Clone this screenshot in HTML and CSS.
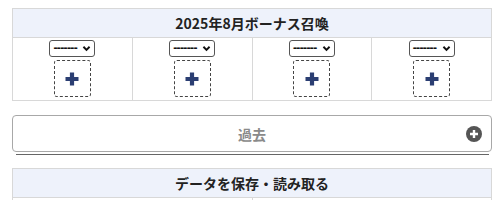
FILE: index.html
```html
<!DOCTYPE html>
<html lang="ja">
<head>
<meta charset="utf-8">
<link rel="stylesheet" href="styles.css">
</head>
<body>
<div class="page">
  <table class="grid">
    <thead>
      <tr><th colspan="4">2025年8月ボーナス召喚</th></tr>
    </thead>
    <tbody>
      <tr>
        <td><div class="cell"><div class="sel"><span class="sel-text">-------</span><svg class="chev" viewBox="0 0 10 8" width="9" height="7"><path d="M1.5 2 L5 5.5 L8.5 2" fill="none" stroke="#111" stroke-width="2.2"/></svg></div><div class="slot"><svg viewBox="0 0 16 16" width="16" height="16"><path d="M8 1.5 V14.5 M1.5 8 H14.5" stroke="#2b3e72" stroke-width="4.2"/></svg></div></div></td>
        <td><div class="cell"><div class="sel"><span class="sel-text">-------</span><svg class="chev" viewBox="0 0 10 8" width="9" height="7"><path d="M1.5 2 L5 5.5 L8.5 2" fill="none" stroke="#111" stroke-width="2.2"/></svg></div><div class="slot"><svg viewBox="0 0 16 16" width="16" height="16"><path d="M8 1.5 V14.5 M1.5 8 H14.5" stroke="#2b3e72" stroke-width="4.2"/></svg></div></div></td>
        <td><div class="cell"><div class="sel"><span class="sel-text">-------</span><svg class="chev" viewBox="0 0 10 8" width="9" height="7"><path d="M1.5 2 L5 5.5 L8.5 2" fill="none" stroke="#111" stroke-width="2.2"/></svg></div><div class="slot"><svg viewBox="0 0 16 16" width="16" height="16"><path d="M8 1.5 V14.5 M1.5 8 H14.5" stroke="#2b3e72" stroke-width="4.2"/></svg></div></div></td>
        <td><div class="cell"><div class="sel"><span class="sel-text">-------</span><svg class="chev" viewBox="0 0 10 8" width="9" height="7"><path d="M1.5 2 L5 5.5 L8.5 2" fill="none" stroke="#111" stroke-width="2.2"/></svg></div><div class="slot"><svg viewBox="0 0 16 16" width="16" height="16"><path d="M8 1.5 V14.5 M1.5 8 H14.5" stroke="#2b3e72" stroke-width="4.2"/></svg></div></div></td>
      </tr>
    </tbody>
  </table>

  <div class="collapse">
    <span class="collapse-label">過去</span>
    <svg class="collapse-icon" viewBox="0 0 16 16" width="16" height="16"><circle cx="8" cy="8" r="8" fill="#555"/><path d="M8 4 V12 M4 8 H12" stroke="#fff" stroke-width="2.4"/></svg>
  </div>
  <div class="rule"></div>

  <table class="grid second">
    <thead>
      <tr><th colspan="2">データを保存・読み取る</th></tr>
    </thead>
    <tbody>
      <tr><td></td><td></td></tr>
    </tbody>
  </table>
</div>
</body>
</html>
```
FILE: styles.css
```css
html, body {
  margin: 0;
  padding: 0;
  background: #fff;
}
body {
  font-family: "Noto Sans CJK JP", "Noto Sans", sans-serif;
  color: #222;
}
.page {
  width: 480px;
  padding: 8px 0 0 12px;
}
.grid {
  width: 480px;
  border-collapse: collapse;
  table-layout: fixed;
}
.grid th {
  height: 28px;
  padding: 0;
  background: #eef2fb;
  border: 1px solid #d8d8d8;
  font-size: 14px;
  font-weight: 700;
  text-align: center;
  color: #222;
}
.grid td {
  border: 1px solid #d8d8d8;
  padding: 0;
  vertical-align: top;
}
.cell {
  height: 62px;
  display: flex;
  flex-direction: column;
  align-items: center;
  padding-top: 2px;
  box-sizing: border-box;
  gap: 3px;
}
.sel {
  width: 46px;
  height: 17px;
  flex: none;
  box-sizing: border-box;
  border: 1px solid #555;
  border-radius: 3px;
  background: #fff;
  display: flex;
  align-items: center;
  justify-content: space-between;
  padding: 0 3px 0 3px;
}
.sel-text {
  font-family: "Liberation Sans", sans-serif;
  font-size: 12px;
  font-weight: 700;
  line-height: 15px;
  color: #111;
  letter-spacing: -0.6px;
}
.chev {
  display: block;
}
.slot {
  width: 37px;
  height: 37px;
  flex: none;
  box-sizing: border-box;
  border: 1px dashed #444;
  border-radius: 3px;
  display: flex;
  align-items: center;
  justify-content: center;
}
.collapse {
  margin-top: 14px;
  height: 37px;
  box-sizing: border-box;
  border: 1px solid #a8a8a8;
  border-radius: 4px;
  display: flex;
  align-items: center;
  justify-content: center;
  position: relative;
}
.collapse-label {
  font-size: 14px;
  font-weight: 700;
  color: #8a8a8a;
}
.collapse-icon {
  position: absolute;
  right: 9px;
  top: 10px;
}
.rule {
  margin: 2px 3px 0 4px;
  height: 1px;
  background: #666;
}
.second {
  margin-top: 13px;
}
.second td {
  height: 10px;
}
```
